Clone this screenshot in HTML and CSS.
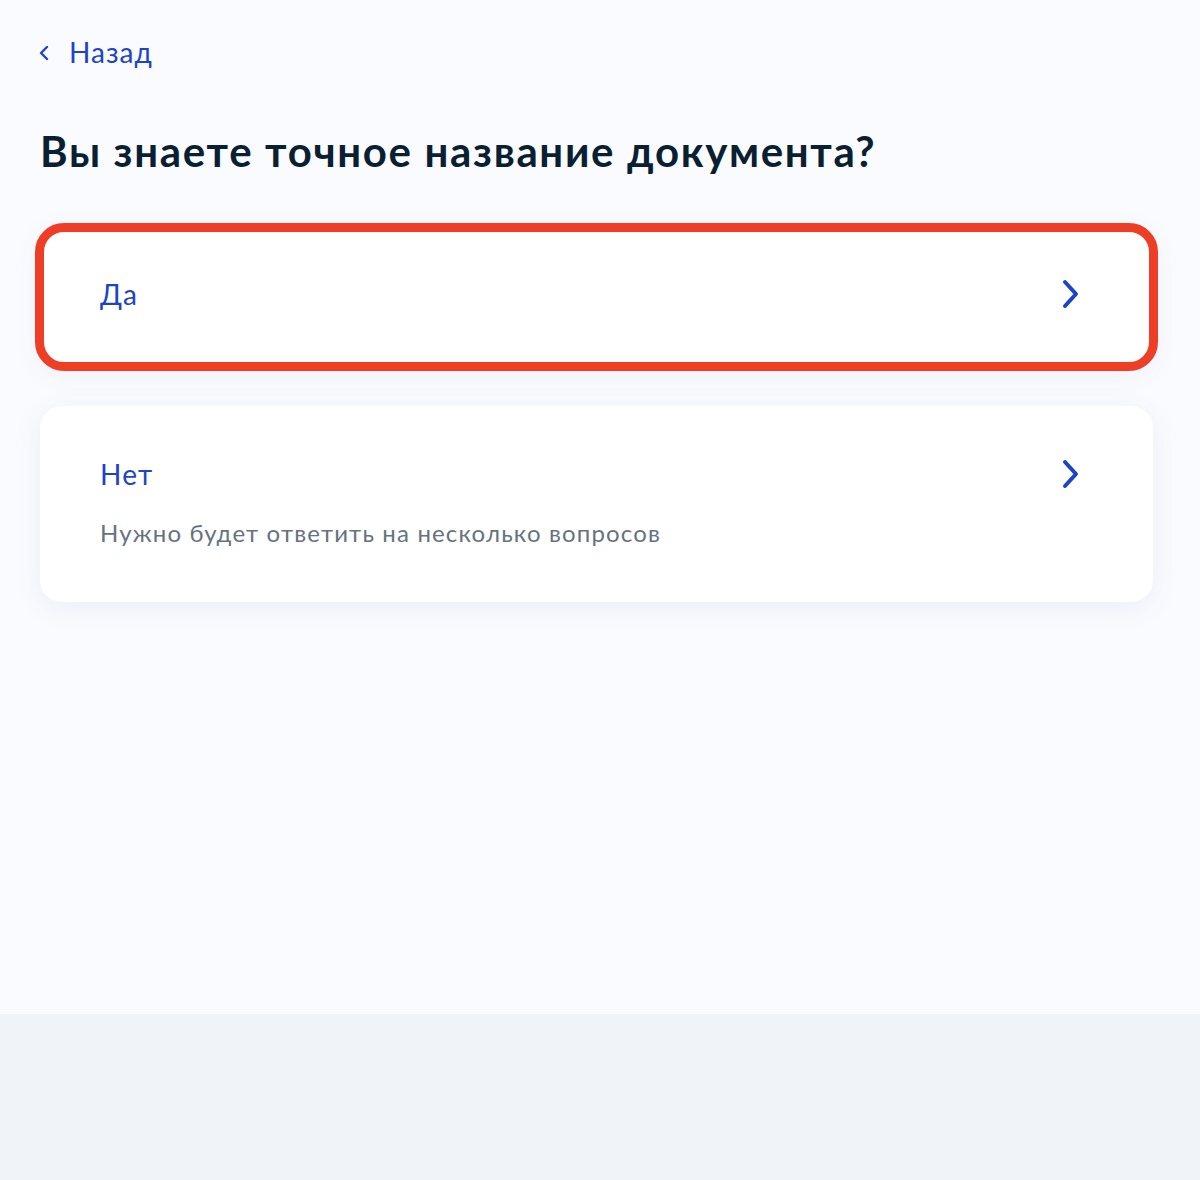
FILE: index.html
```html
<!DOCTYPE html>
<html lang="ru">
<head>
<meta charset="utf-8">
<link rel="stylesheet" href="styles.css">
</head>
<body>
<div class="page">
  <main class="main">
    <a class="back" href="#">
      <svg class="back-icon" width="12" height="16" viewBox="0 0 12 16"><path d="M9 2 L3 8 L9 14" fill="none" stroke="#1D44C8" stroke-width="2.4" stroke-linecap="round" stroke-linejoin="round"/></svg>
      <span>Назад</span>
    </a>
    <h1 class="title">Вы знаете точное название документа?</h1>
    <div class="options">
      <a class="card card-selected" href="#">
        <div class="card-body">
          <div class="card-title">Да</div>
        </div>
        <svg class="chevron" width="20" height="32" viewBox="0 0 20 32"><path d="M4 4 L15 16 L4 28" fill="none" stroke="#1D44C8" stroke-width="4" stroke-linecap="round" stroke-linejoin="round"/></svg>
      </a>
      <a class="card" href="#">
        <div class="card-body">
          <div class="card-title">Нет</div>
          <div class="card-sub">Нужно будет ответить на несколько вопросов</div>
        </div>
        <svg class="chevron" width="20" height="32" viewBox="0 0 20 32"><path d="M4 4 L15 16 L4 28" fill="none" stroke="#1D44C8" stroke-width="4" stroke-linecap="round" stroke-linejoin="round"/></svg>
      </a>
    </div>
  </main>
  <footer class="footer"></footer>
</div>
</body>
</html>
```
FILE: styles.css
```css
* { box-sizing: border-box; }
html, body { margin: 0; padding: 0; }
body {
  font-family: Lato, "Noto Sans", sans-serif;
  background: #FAFBFE;
  color: #0B1F33;
}
.page {
  min-height: 1180px;
  display: flex;
  flex-direction: column;
}
.main {
  height: 1014px;
  padding: 32px 47px 0 38px;
}
.back {
  display: inline-flex;
  align-items: center;
  gap: 19px;
  color: #1D44C8;
  text-decoration: none;
  font-size: 28px;
  line-height: 40px;
  letter-spacing: 1px;
}
.back-icon { display: block; margin-top: 1px; }
.title {
  margin: 53px 0 0 2px;
  font-size: 42px;
  line-height: 52px;
  font-weight: 700;
  letter-spacing: 1.65px;
  color: #0B1F33;
}
.options {
  margin-top: 51px;
  margin-left: 2px;
  display: flex;
  flex-direction: column;
  gap: 40px;
}
.card {
  display: flex;
  align-items: flex-start;
  justify-content: space-between;
  background: #FFFFFF;
  border-radius: 22px;
  padding: 48px 72px 53px 60px;
  text-decoration: none;
  box-shadow: 0 6px 30px rgba(60, 90, 160, 0.08);
}
.card-selected {
  padding-top: 46px;
  padding-bottom: 52px;
  outline: 9px solid #EE3F26;
  outline-offset: -4px;
  border-radius: 24px;
}
.card-title {
  color: #1D44C8;
  font-size: 28px;
  line-height: 40px;
  letter-spacing: 1.2px;
}
.card-sub {
  margin-top: 23px;
  color: #66727F;
  font-size: 24px;
  line-height: 32px;
  letter-spacing: 1.15px;
}
.chevron { display: block; margin-top: 4px; }
.footer {
  flex: 1;
  background: #F0F4F8;
}
```
